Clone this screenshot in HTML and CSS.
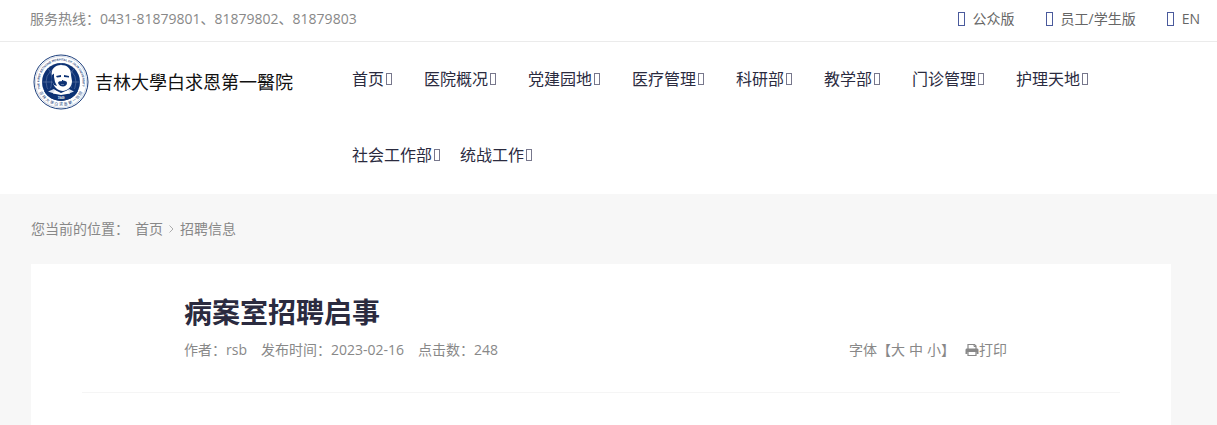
FILE: index.html
```html
<!DOCTYPE html>
<html lang="zh-CN">
<head>
  <meta charset="UTF-8" />
  <meta name="viewport" content="width=device-width, initial-scale=1" />
  <title>病案室招聘启事</title>
  <link rel="stylesheet" href="styles.css">
</head>
<body>

<div class="topbar">
  <span class="hotline">服务热线：0431-81879801、81879802、81879803</span>
  <div class="top-links">
    <a href="#"><i class="box"></i>公众版</a>
    <a href="#"><i class="box"></i>员工/学生版</a>
    <a href="#"><i class="box"></i>EN</a>
  </div>
</div>

<header class="header">
  <a class="logo" href="#">
    <svg class="emblem" viewBox="0 0 56 56" aria-hidden="true">
      <defs>
        <path id="ringTop" d="M7.5 35 A21.6 21.6 0 1 1 48.5 35" />
      </defs>
      <circle cx="28" cy="28" r="27" fill="#fff" stroke="#1d3f7c" stroke-width="1" />
      <circle cx="28" cy="28" r="25.6" fill="none" stroke="#8d9fbf" stroke-width="0.4" />
      <circle cx="28" cy="28" r="19" fill="#0d3274" />
      <g fill="none" stroke="#7489b3" stroke-width="0.5">
        <path d="M9 28H47M28 9V47M15 14.500Q23 22 15 41.500M41 14.500Q33 22 41 41.500" />
        <circle cx="28" cy="28" r="15" />
      </g>
      <path d="M11 37C14 35 19 35 21 32H36C38 35 43 35 45 37C41 44 35 46.500 28 46.500S15 44 11 37Z" fill="#0d3274" />
      <path d="M15 37.500L21 35L24 38L21 39.500ZM41 37.500L36 35L33 38L36 39.500Z" fill="#dce3ef" />
      <path d="M22 36L28 39L35 36L37 39.500L28 41L20 39.500Z" fill="#fff" />
      <path d="M19 22C17.500 15 22 11 28 11S38 14 38 21L39 27C39 32 36 36 30 37C25 37 21 33 20 29Z" fill="#fff" />
      <path d="M19 21L21 19.500L21 23L22 28L24 32L21 31L18.500 26Z" fill="#0d3274" />
      <path d="M23 22L28 21V23L24 23.500ZM31 21L36 22V23.500L31 23Z" fill="#0d3274" />
      <path d="M25 29C26 26 29 28 30 26.500C32 27 34 27 34 29C34 31 32 32.500 30 32.500S26 31.500 25 29Z" fill="#0d3274" />
      <path d="M28 30.500H31" stroke="#8d9fbf" stroke-width="0.6" />
      <text class="ring-en"><textPath href="#ringTop">THE FIRST BETHUNE HOSPITAL OF JILIN UNIVERSITY</textPath></text>
      <g class="ring-cn">
        <text x="28" y="52" transform="rotate(60 28 28)">吉</text>
        <text x="28" y="52" transform="rotate(48 28 28)">林</text>
        <text x="28" y="52" transform="rotate(36 28 28)">大</text>
        <text x="28" y="52" transform="rotate(24 28 28)">学</text>
        <text x="28" y="52" transform="rotate(12 28 28)">白</text>
        <text x="28" y="52">求</text>
        <text x="28" y="52" transform="rotate(-12 28 28)">恩</text>
        <text x="28" y="52" transform="rotate(-24 28 28)">第</text>
        <text x="28" y="52" transform="rotate(-36 28 28)">一</text>
        <text x="28" y="52" transform="rotate(-48 28 28)">医</text>
        <text x="28" y="52" transform="rotate(-60 28 28)">院</text>
      </g>
      <text class="year" x="28" y="45">1949</text>
    </svg>
    <span class="logo-name">吉林大學白求恩第一醫院</span>
  </a>

  <nav class="nav" aria-label="主导航">
    <ul>
      <li><a href="#">首页<i class="box"></i></a></li>
      <li><a href="#">医院概况<i class="box"></i></a></li>
      <li><a href="#">党建园地<i class="box"></i></a></li>
      <li><a href="#">医疗管理<i class="box"></i></a></li>
      <li><a href="#">科研部<i class="box"></i></a></li>
      <li><a href="#">教学部<i class="box"></i></a></li>
      <li><a href="#">门诊管理<i class="box"></i></a></li>
      <li><a href="#">护理天地<i class="box"></i></a></li>
      <li class="narrow"><a href="#">社会工作部<i class="box"></i></a></li>
      <li class="narrow"><a href="#">统战工作<i class="box"></i></a></li>
    </ul>
  </nav>
</header>

<main class="content">
  <div class="breadcrumb">
    <span>您当前的位置：</span>
    <a href="#">首页</a>
    <svg width="5" height="8" viewBox="0 0 5 8" aria-hidden="true"><path d="M0.500 0.500L4 4L0.500 7.500" fill="none" stroke="#999" stroke-width="0.8" /></svg>
    <a href="#">招聘信息</a>
  </div>

  <article class="article">
    <div class="article-head">
      <h1>病案室招聘启事</h1>
      <div class="meta">
        <div class="meta-info">
          <span>作者：rsb</span>
          <span>发布时间：2023-02-16</span>
          <span>点击数：248</span>
        </div>
        <div class="tools">
          <span class="sizes">字体【<button type="button">大</button><button type="button">中</button><button type="button">小</button>】</span>
          <button type="button" class="print">
            <svg width="14" height="14" viewBox="0 0 14 14" aria-hidden="true">
              <path d="M3 6V1.500H9.500L11 3V6" fill="none" stroke="#888" stroke-width="1.200" />
              <path d="M9 1.500V3.500H11" fill="none" stroke="#888" />
              <path d="M1.500 5.500H12.500Q13.500 5.500 13.500 7V11H11.500V9H2.500V11H0.500V7Q0.500 5.500 1.500 5.500Z" fill="#888" />
              <path d="M3 9V12.500H11V9" fill="none" stroke="#888" stroke-width="1.200" />
            </svg>打印
          </button>
        </div>
      </div>
    </div>
  </article>
</main>

</body>
</html>
```
FILE: styles.css
```css
* {
  box-sizing: border-box;
}
body {
  display: flex;
  flex-direction: column;
  min-height: 100vh;
  margin: 0;
  font-family: "Open Sans", "Noto Sans CJK SC", sans-serif;
  font-size: 14px;
  line-height: 20px;
  color: #888;
  background: #f7f7f7;
}
a {
  color: inherit;
  text-decoration: none;
}
button {
  padding: 0;
  border: none;
  background: none;
  font: inherit;
  color: inherit;
  cursor: pointer;
}
.box {
  display: inline-block;
  width: 6px;
  height: 12px;
  border: 1px solid #77778c;
}

/* top bar */
.topbar {
  display: flex;
  justify-content: space-between;
  align-items: center;
  min-height: 42px;
  padding: 0 17px 4px 30px;
  background: #fff;
  border-bottom: 1px solid #ebebeb;
}
.top-links {
  display: flex;
  gap: 31px;
  color: #666;
}
.top-links a {
  display: flex;
  align-items: center;
  gap: 8px;
}
.top-links .box {
  width: 7px;
  height: 14px;
  border-color: #4a5a9c;
}

/* header */
.header {
  display: flex;
  align-items: flex-start;
  padding: 0 70px 0 33px;
  background: #fff;
}
.logo {
  display: flex;
  flex: none;
  align-items: center;
  gap: 6px;
  width: 319px;
  height: 80px;
}
.emblem {
  width: 56px;
  height: 56px;
}
.ring-en {
  font: bold 3px "Liberation Sans", sans-serif;
  fill: #1d3f7c;
}
.ring-cn {
  font: 4px "Noto Sans CJK SC", sans-serif;
  text-anchor: middle;
  fill: #1d3f7c;
}
.year {
  font: bold 3px "Liberation Sans", sans-serif;
  text-anchor: middle;
  fill: #fff;
}
.logo-name {
  font-size: 18px;
  color: #111;
  white-space: nowrap;
}
.nav ul {
  display: flex;
  flex-wrap: wrap;
  margin: 0;
  padding: 0;
  list-style: none;
}
.nav li {
  padding-right: 32px;
}
.nav .narrow {
  padding-right: 20px;
}
.nav a {
  display: flex;
  align-items: center;
  gap: 2px;
  height: 76px;
  padding-bottom: 2px;
  font-size: 16px;
  color: #2b2b3f;
}

/* content */
.content {
  display: flex;
  flex: 1;
  flex-direction: column;
  padding: 0 46px 0 31px;
}
.breadcrumb {
  display: flex;
  align-items: center;
  gap: 6px;
  height: 70px;
}
.article {
  flex: 1;
  padding: 0 51px;
  background: #fff;
}
.article-head {
  padding: 28px 113px 32px 102px;
  border-bottom: 1px solid #f5f5f5;
}
h1 {
  margin: 0 0 8px;
  font-size: 28px;
  line-height: 40px;
  font-weight: 700;
  color: #2b2b3f;
}
.meta {
  display: flex;
  justify-content: space-between;
}
.meta-info {
  display: flex;
  gap: 14px;
}
.tools {
  display: flex;
  gap: 10px;
}
.sizes button + button {
  margin-left: 4px;
}
.print {
  display: flex;
  align-items: center;
}
```
